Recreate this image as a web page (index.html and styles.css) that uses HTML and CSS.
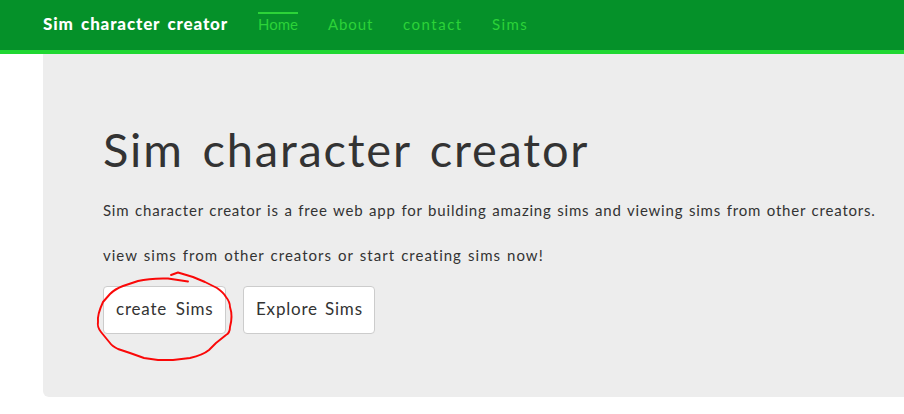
FILE: index.html
```html
<!DOCTYPE html>
<html lang="en">
<head>
<meta charset="utf-8">
<title>Sim character creator</title>
<link rel="stylesheet" href="styles.css">
</head>
<body>
<header class="navbar">
  <a class="brand">Sim character creator</a>
  <nav class="links">
    <a class="link home active">Home</a>
    <a class="link about">About</a>
    <a class="link contact">contact</a>
    <a class="link sims">Sims</a>
  </nav>
</header>
<main class="jumbotron">
  <h1 class="title">Sim character creator</h1>
  <p class="text intro">Sim character creator is a free web app for building amazing sims and viewing sims from other creators.</p>
  <p class="text invite">view sims from other creators or start creating sims now!</p>
  <div class="actions">
    <a class="button create">create Sims
      <svg class="circle" width="150" height="100" viewBox="0 0 150 100" fill="none" stroke="#fa0808" stroke-width="1.9" stroke-linecap="round" stroke-linejoin="round"><path d="M81 10L88 7.500L103 12L115 17L127 23Q134 28 136 32Q140 37 140 42Q143 51 140 62Q140 68 136 70L126 78L119 85Q113 90 100 93L83 95L68 95L54 93L40 88L28 84Q22 81 20 78L11 67Q7 62 8 57Q7 50 13 37L20 29Q25 24 33 21L48 16Q60 13 78 13.500L98 16.500"/></svg>
    </a>
    <a class="button explore">Explore Sims</a>
  </div>
</main>
</body>
</html>
```

FILE: styles.css
```css
* { box-sizing: border-box; }
body {
  margin: 0;
  background: #fff;
  color: #333;
  font-family: Lato, sans-serif;
}
.navbar {
  display: flex;
  height: 54px;
  padding-left: 43px;
  background: #059129;
  border-bottom: 4px solid #1fd732;
}
.brand {
  width: 215px;
  padding-top: 14px;
  color: #fff;
  font-size: 17px;
  font-weight: 900;
  line-height: 20px;
  letter-spacing: 0.85px;
  word-spacing: 2.5px;
  white-space: nowrap;
}
.links {
  display: flex;
  gap: 30px;
  padding-top: 12px;
}
.link {
  height: 24px;
  border-top: 2px solid transparent;
  color: #2cd338;
  font-size: 15px;
  line-height: 20px;
  white-space: nowrap;
}
.active { border-top-color: #2cd338; }
.home { width: 40px; }
.about { width: 45px; letter-spacing: 0.9px; }
.contact { width: 59px; letter-spacing: 1.5px; }
.sims { width: 36px; letter-spacing: 1.4px; }
.jumbotron {
  height: 343px;
  margin-left: 43px;
  padding: 65px 0 0 60px;
  background: #ededed;
  border-bottom-left-radius: 6px;
}
.title {
  margin: 0;
  font-size: 47px;
  font-weight: 400;
  line-height: 60px;
  letter-spacing: 1.8px;
  word-spacing: 5px;
  white-space: nowrap;
}
.text {
  margin: 0;
  font-size: 15px;
  line-height: 22px;
  letter-spacing: 0.8px;
  white-space: nowrap;
}
.intro {
  margin-top: 20px;
  word-spacing: 1px;
}
.invite {
  margin-top: 23px;
  letter-spacing: 1px;
  word-spacing: 1.3px;
}
.actions {
  display: flex;
  gap: 17px;
  margin-top: 20px;
}
.button {
  position: relative;
  height: 48px;
  border: 1px solid #ccc;
  border-radius: 4px;
  padding-left: 12px;
  background: #fff;
  font-size: 17px;
  line-height: 44px;
  letter-spacing: 0.8px;
  white-space: nowrap;
}
.create { width: 123px; word-spacing: 3.5px; }
.explore { width: 132px; word-spacing: 2px; }
.circle {
  position: absolute;
  left: -14px;
  top: -22px;
}
```
